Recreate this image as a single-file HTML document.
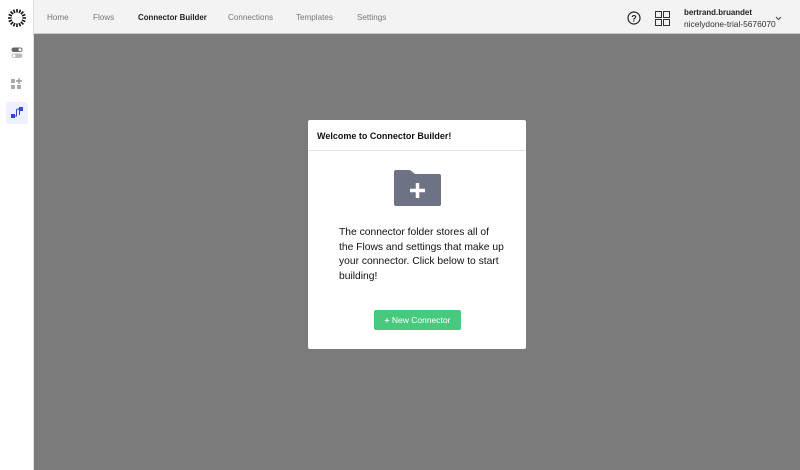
<!DOCTYPE html>
<html><head><style>
*{margin:0;padding:0;box-sizing:border-box}
body{width:800px;height:470px;overflow:hidden;font-family:"Liberation Sans",sans-serif;background:#7b7b7b;position:relative}
.side{position:absolute;left:0;top:0;width:34px;height:470px;background:#fff;border-right:1px solid #ddd}
.top{position:absolute;left:34px;top:0;right:0;height:34px;background:#f3f3f3;border-bottom:1px solid #ccc}
.nav{position:absolute;top:13px;font-size:8.1px;color:#777}
.card{position:absolute;left:308px;top:120px;width:218px;height:229px;background:#fff;border-radius:2px}
</style></head><body>
<div class="side">
<svg style="position:absolute;left:7px;top:8px" width="20" height="20" viewBox="0 0 20 20"><g stroke="#111" stroke-width="1.6"><line x1="10" y1="1" x2="10" y2="19"/><line x1="1" y1="10" x2="19" y2="10"/><line x1="3.6" y1="3.6" x2="16.4" y2="16.4"/><line x1="16.4" y1="3.6" x2="3.6" y2="16.4"/><line x1="6.5" y1="1.7" x2="13.5" y2="18.3"/><line x1="13.5" y1="1.7" x2="6.5" y2="18.3"/><line x1="1.7" y1="6.5" x2="18.3" y2="13.5"/><line x1="18.3" y1="6.5" x2="1.7" y2="13.5"/></g><circle cx="10" cy="10" r="5.5" fill="#fff"/></svg>
<svg style="position:absolute;left:11px;top:47px" width="12" height="12"><rect x="0.5" y="0.5" width="11" height="4.5" rx="2.2" fill="#666"/><circle cx="9" cy="2.7" r="1.5" fill="#fff"/><rect x="0.5" y="6.5" width="11" height="4.5" rx="2.2" fill="#bbb"/><circle cx="3" cy="8.7" r="1.5" fill="#fff"/></svg>
<svg style="position:absolute;left:11px;top:78px" width="12" height="12"><rect x="0" y="1" width="4" height="4" fill="#aaa"/><rect x="0" y="7" width="4" height="4" fill="#aaa"/><rect x="6" y="7" width="4" height="4" fill="#aaa"/><path d="M8 0v6M5 3h6" stroke="#888" stroke-width="1.2"/></svg>
<div style="position:absolute;left:6px;top:102px;width:22px;height:22px;background:#eef0ff;border-radius:3px"></div>
<svg style="position:absolute;left:11px;top:107px" width="12" height="12"><rect x="0" y="7" width="4" height="4" fill="#3046d6"/><rect x="8" y="0" width="4" height="4" fill="#3046d6"/><path d="M4 9h1.5V3.5a1.5 1.5 0 0 1 3 0V8" stroke="#3046d6" fill="none"/></svg>
</div>
<div class="top">
<span class="nav" style="left:13px">Home</span>
<span class="nav" style="left:59px">Flows</span>
<span class="nav" style="left:104px;color:#222;font-weight:bold;font-size:7.9px">Connector Builder</span>
<span class="nav" style="left:194px">Connections</span>
<span class="nav" style="left:262px">Templates</span>
<span class="nav" style="left:323px">Settings</span>
<svg style="position:absolute;left:593px;top:11px" width="14" height="14"><circle cx="7" cy="7" r="6" fill="none" stroke="#222" stroke-width="1.2"/><text x="7" y="10.5" font-size="9" text-anchor="middle" font-family="Liberation Sans" font-weight="bold" fill="#222">?</text></svg>
<svg style="position:absolute;left:621px;top:11px" width="15" height="15"><g fill="none" stroke="#333" stroke-width="1"><rect x="0.5" y="0.5" width="6" height="6"/><rect x="8.5" y="0.5" width="6" height="6"/><rect x="0.5" y="8.5" width="6" height="6"/><rect x="8.5" y="8.5" width="6" height="6"/></g></svg>
<span style="position:absolute;left:650px;top:8px;font-size:7.9px;font-weight:bold;color:#222">bertrand.bruandet</span>
<span style="position:absolute;left:650px;top:19px;font-size:8.4px;color:#333">nicelydone-trial-5676070</span>
<svg style="position:absolute;left:741px;top:16px" width="7" height="5"><path d="M1 1l2.5 2.5L6 1" stroke="#444" fill="none"/></svg>
</div>
<div class="card">
<div style="height:31px;border-bottom:1px solid #e3e3e3;padding:11px 0 0 9px;font-size:9px;font-weight:bold;color:#111">Welcome to Connector Builder!</div>
<svg style="position:absolute;left:86px;top:50px" width="47" height="36" viewBox="0 0 47 36"><path d="M2 0h14l5 4h24a2 2 0 0 1 2 2v28a2 2 0 0 1-2 2H2a2 2 0 0 1-2-2V2a2 2 0 0 1 2-2z" fill="#6d7285"/><path d="M23.5 13v15M16 20.5h15" stroke="#fff" stroke-width="3.5"/></svg>
<div style="position:absolute;left:31px;top:106px;width:168px;font-size:10.3px;line-height:14.5px;color:#111">The connector folder stores all of<br>the Flows and settings that make up<br>your connector. Click below to start<br>building!</div>
<div style="position:absolute;left:66px;top:190px;width:87px;height:20px;background:#49c97d;border-radius:2px;color:#fff;font-size:8.5px;text-align:center;line-height:20px"><b>+</b> New Connector</div>
</div>
</body></html>
